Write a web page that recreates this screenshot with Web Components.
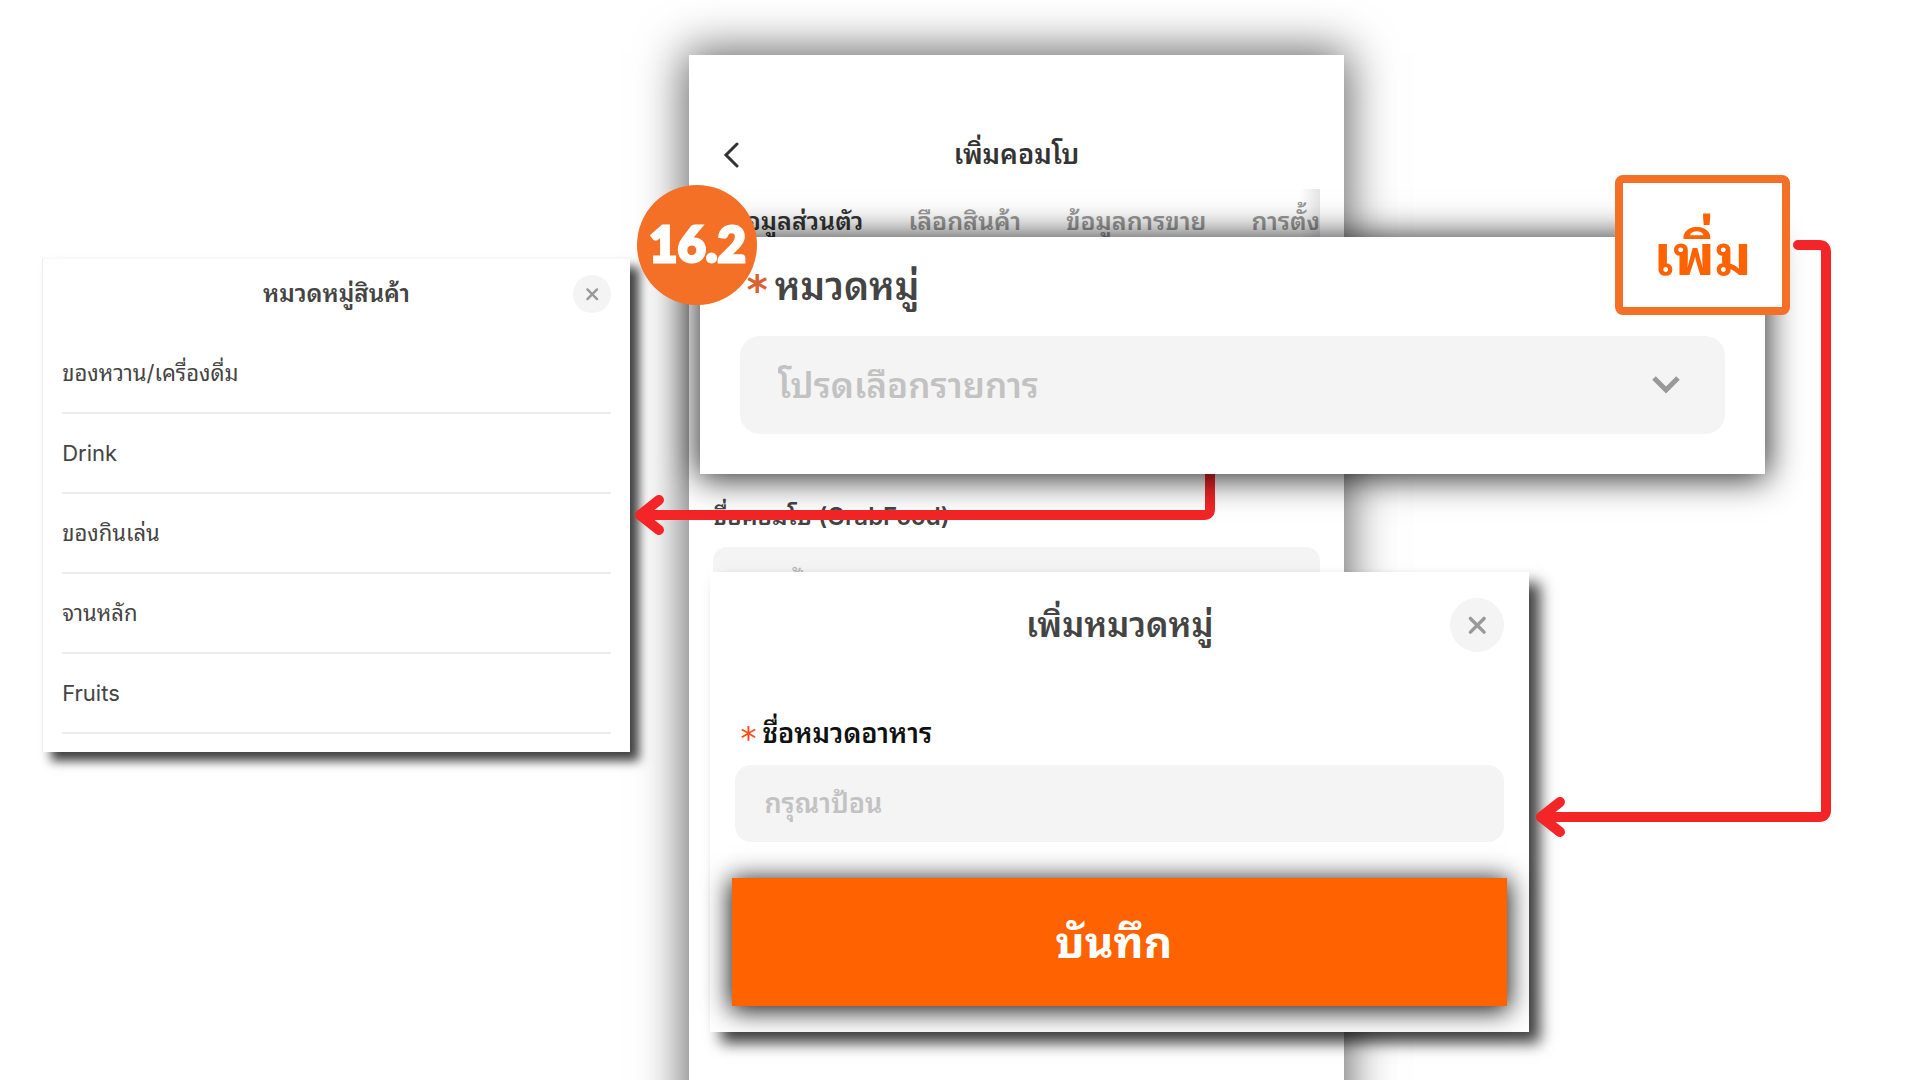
<!DOCTYPE html>
<html lang="th">
<head>
<meta charset="utf-8">
<meta name="viewport" content="width=device-width, initial-scale=1">
<title>เพิ่มหมวดหมู่</title>
<style>
  html, body { margin: 0; min-height: 100%; background: #fff; }
  body { font-family: Inter, Thonburi, "Noto Sans Thai Looped", Loma, Garuda, Waree, sans-serif; color: #444; overflow: hidden; }
</style>
</head>
<body>
<guide-canvas>
  <phone-screen slot="phone" heading="เพิ่มคอมโบ"></phone-screen>
  <category-list slot="list" heading="หมวดหมู่สินค้า" items="ของหวาน/เครื่องดื่ม|Drink|ของกินเล่น|จานหลัก|Fruits"></category-list>
  <category-picker slot="picker"></category-picker>
  <category-dialog slot="dialog" heading="เพิ่มหมวดหมู่"></category-dialog>
  <add-button slot="add">เพิ่ม</add-button>
  <step-badge slot="step">16.2</step-badge>
</guide-canvas>

<script>
const define = (name, html, setup) => {
  const template = document.createElement('template');
  template.innerHTML = '<style>:host,*{box-sizing:border-box}button,input,select{font:inherit;color:inherit;border:0;margin:0;padding:0;background:none;border-radius:0}h1,h2,ul{margin:0;padding:0;list-style:none}</style>' + html;
  customElements.define(name, class extends HTMLElement {
    constructor() {
      super();
      this.attachShadow({ mode: 'open' }).append(template.content.cloneNode(true));
    }
    connectedCallback() {
      if (setup) setup(this, this.shadowRoot);
    }
  });
};
const setHeading = (host, root) => { root.querySelector('.heading').textContent = host.getAttribute('heading'); };

/* Round close button, sized by --size */
define('close-button', `
<style>
  :host { display: block; }
  button { display: grid; place-items: center; width: var(--size, 38px); height: var(--size, 38px); border-radius: 50%; background: #f4f4f4; }
  svg { width: 38%; height: 38%; }
</style>
<button type="button" aria-label="ปิด">
  <svg viewBox="0 0 24 24" fill="none" stroke="#999" stroke-width="4" stroke-linecap="round"><path d="M4 4 20 20M20 4 4 20"/></svg>
</button>`);

/* Orange required mark */
define('required-mark', `
<style>
  :host { display: block; width: var(--mark-width, 16px); color: var(--mark-color, #ff4a12); font-family: "DejaVu Sans", sans-serif; font-size: var(--mark-size, 32px); font-weight: var(--mark-weight, 400); padding-top: 8px; }
</style>
<span>*</span>`);

/* Phone screen behind everything */
define('phone-screen', `
<style>
  :host { display: flex; flex-direction: column; background: #fff; box-shadow: 0 0 44px 4px rgba(0,0,0,.62); padding: 76px 24px 0; }
  header { display: grid; grid-template-columns: 48px 1fr 48px; align-items: center; height: 48px; color: #333; }
  .back { display: flex; align-items: center; height: 48px; padding-left: 10px; }
  .heading { text-align: center; font-size: 27px; line-height: 48px; font-weight: 600; }
  nav { position: relative; display: flex; gap: 45px; overflow: hidden; margin-top: 10px; height: 64px; align-items: center; padding-left: 18px; }
  nav::after { content: ""; position: absolute; right: 0; top: 0; width: 20px; height: 100%; background: linear-gradient(to right, transparent, rgba(0,0,0,.1)); }
  nav button { flex: none; font-size: 25px; line-height: 32px; font-weight: 600; color: #999; white-space: nowrap; }
  nav button[aria-selected=true] { color: #333; }
  .field { display: flex; flex-direction: column; gap: 14px; margin-top: 248px; }
  label { font-size: 24px; line-height: 32px; font-weight: 600; }
  input { height: 66px; border-radius: 14px; background: #f4f4f4; padding: 0 16px; font-size: 25px; width: 100%; }
  input::placeholder { color: #bbb; opacity: 1; }
</style>
<header>
  <button class="back" type="button" aria-label="กลับ"><svg width="18" height="26" viewBox="0 0 18 26" fill="none" stroke="#333" stroke-width="3" stroke-linecap="round"><path d="M14 2 3 13 14 24"/></svg></button>
  <h1 class="heading"></h1>
</header>
<nav role="tablist">
  <button role="tab" aria-selected="true">ข้อมูลส่วนตัว</button>
  <button role="tab">เลือกสินค้า</button>
  <button role="tab">ข้อมูลการขาย</button>
  <button role="tab">การตั้งค่า</button>
</nav>
<div class="field">
  <label for="combo">ชื่อคอมโบ (GrabFood)</label>
  <input id="combo" placeholder="กรุณาป้อน">
</div>`, setHeading);

/* List of product categories */
define('category-list', `
<style>
  :host { display: block; background: #fff; border-left: 1px solid #eee; border-top: 1px solid #f8f8f8; padding: 0 19px 18px; box-shadow: 9px 9px 10px rgba(0,0,0,.75); }
  header { display: grid; grid-template-columns: 38px 1fr 38px; align-items: center; height: 70px; margin-bottom: 5px; }
  .heading { grid-column: 2; text-align: center; font-size: 24px; line-height: 36px; font-weight: 600; }
  li button { display: block; width: 100%; height: 80px; border-bottom: 2px solid #ececec; text-align: left; font-size: 22px; line-height: 32px; }
</style>
<header><h2 class="heading"></h2><close-button></close-button></header>
<ul></ul>`, (host, root) => {
  setHeading(host, root);
  root.querySelector('ul').replaceChildren(...host.getAttribute('items').split('|').map(text => {
    const li = document.createElement('li');
    const button = document.createElement('button');
    button.type = 'button';
    button.textContent = text;
    li.append(button);
    return li;
  }));
});

/* Magnified drop-down card */
define('category-picker', `
<style>
  :host { display: flex; flex-direction: column; background: #fff; padding: 21px 40px 40px; box-shadow: 0 2px 32px 2px rgba(0,0,0,.85); }
  .label { display: flex; align-items: center; gap: 8px; height: 56px; padding-left: 7px; margin-bottom: 22px; font-size: 38px; line-height: 56px; font-weight: 600; }
  .label required-mark { --mark-width: 20px; --mark-size: 40px; --mark-color: #d9602f; --mark-weight: 700; }
  .select { position: relative; display: flex; align-items: center; }
  select { appearance: none; width: 100%; height: 98px; border-radius: 20px; background: #f4f4f4; padding: 0 80px 0 38px; font-size: 35px; font-weight: 600; color: #c2c2c2; }
  svg { position: absolute; right: 44px; pointer-events: none; }
</style>
<label class="label" for="category"><required-mark></required-mark>หมวดหมู่</label>
<div class="select">
  <select id="category"><option>โปรดเลือกรายการ</option></select>
  <svg width="30" height="20" viewBox="0 0 30 20" fill="none" stroke="#999" stroke-width="5"><path d="M3 3 15 15 27 3"/></svg>
</div>`);

/* Dialog that adds a category */
define('category-dialog', `
<style>
  :host { display: flex; flex-direction: column; background: #fff; padding: 0 25px 26px; box-shadow: 11px 11px 14px rgba(0,0,0,.75); }
  header { display: grid; grid-template-columns: 54px 1fr 54px; align-items: center; height: 106px; }
  .heading { grid-column: 2; text-align: center; font-size: 34px; line-height: 54px; font-weight: 600; }
  close-button { --size: 54px; }
  .label { display: flex; align-items: center; gap: 6px; height: 40px; margin-top: 36px; margin-bottom: 11px; padding-left: 5px; font-size: 27px; line-height: 40px; font-weight: 600; color: #111; }
  input { height: 77px; border-radius: 16px; background: #f4f4f4; padding: 0 29px; font-size: 27px; font-weight: 600; }
  input::placeholder { color: #c2c2c2; opacity: 1; }
  .save { height: 128px; margin: 36px -3px 0; padding: 0 12px 8px 0; background: #ff6200; color: #fff; font-size: 44px; font-weight: 700; box-shadow: 0 3px 24px 2px rgba(0,0,0,.9); }
</style>
<header><h2 class="heading"></h2><close-button></close-button></header>
<label class="label" for="name"><required-mark></required-mark>ชื่อหมวดอาหาร</label>
<input id="name" placeholder="กรุณาป้อน">
<button class="save" type="button">บันทึก</button>`, setHeading);

define('add-button', `
<style>
  :host { display: block; }
  button { display: block; width: 100%; height: 140px; border: 8px solid #f37026; border-radius: 8px; background: #fff; color: #ff6200; font-size: 56px; font-weight: 700; padding-top: 10px; }
</style>
<button type="button"><slot></slot></button>`);

define('step-badge', `
<style>
  :host { display: grid; place-items: center; width: 120px; height: 120px; border-radius: 50%; background: #f37026; color: #fff; font-family: Lato, sans-serif; font-size: 49px; line-height: 56px; font-weight: 900; padding-bottom: 4px; -webkit-text-stroke: 3px #fff; }
</style>
<slot></slot>`);

/* Free canvas: overlapping windows joined by red connectors */
define('guide-canvas', `
<style>
  :host { display: block; position: relative; height: 100vh; min-height: 1080px; overflow: hidden; }
  ::slotted(*), svg { position: absolute; }
  ::slotted([slot=phone]) { left: 35.9%; top: 55px; width: 34.1%; bottom: -60px; }
  ::slotted([slot=list]) { left: 2.2%; top: 258px; width: 30.6%; }
  ::slotted([slot=picker]) { left: 36.45%; top: 237px; width: 55.5%; }
  ::slotted([slot=dialog]) { left: 37%; top: 572px; width: 42.65%; }
  ::slotted([slot=add]) { left: 84.1%; top: 175px; width: 9.15%; }
  ::slotted([slot=step]) { left: 33.2%; top: 185px; }
  svg { left: 0; top: 0; width: 100%; height: 1080px; }
</style>
<slot name="phone"></slot>
<slot name="list"></slot>
<svg viewBox="0 0 1920 1080" preserveAspectRatio="none" fill="none" stroke="#f32526" stroke-width="10" stroke-linecap="round" stroke-linejoin="round">
  <path d="M1210 460V509Q1210 515 1204 515H640"/><path d="M659 500 640 515 659 530"/>
</svg>
<slot name="picker"></slot>
<slot name="dialog"></slot>
<svg viewBox="0 0 1920 1080" preserveAspectRatio="none" fill="none" stroke="#f32526" stroke-width="10" stroke-linecap="round" stroke-linejoin="round">
  <path d="M1798 245H1819Q1826 245 1826 252V810Q1826 817 1819 817H1541"/><path d="M1560 802 1541 817 1560 832"/>
</svg>
<slot name="add"></slot>
<slot name="step"></slot>`);
</script>
</body>
</html>
